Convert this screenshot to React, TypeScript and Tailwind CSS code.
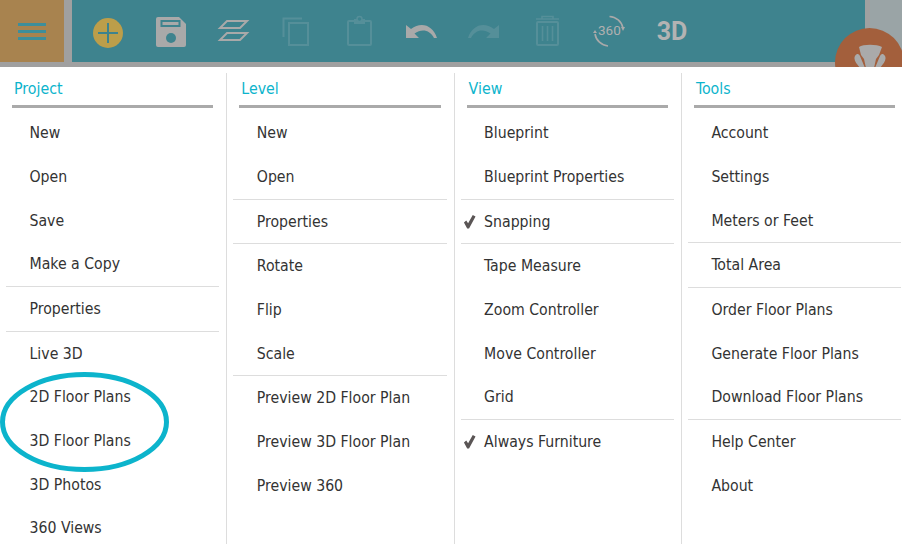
const Item = ({ t, check }: { t: string; check?: boolean }) => (
  <div className="relative flex h-[43.67px] items-center pl-[23.5px] text-[15.7px] text-[#333333]">
    {check && (
      <svg viewBox="0 0 14 16" className="absolute left-[2px] top-[14px] h-[15px] w-[13px]">
        <path d="M1 9 L3.5 7 L5.5 10 L10.5 1 L13.5 2.5 L6.5 15.5 L4.5 15.5 Z" fill="#5a5555" />
      </svg>
    )}
    {t}
  </div>
);
const Hr = () => <div className="h-px bg-[#dddddd]" />;

type Row = string | { t: string; check?: boolean } | null;
const cols: { title: string; rows: Row[] }[] = [
  { title: "Project", rows: ["New", "Open", "Save", "Make a Copy", null, "Properties", null, "Live 3D", "2D Floor Plans", "3D Floor Plans", "3D Photos", "360 Views"] },
  { title: "Level", rows: ["New", "Open", null, "Properties", null, "Rotate", "Flip", "Scale", null, "Preview 2D Floor Plan", "Preview 3D Floor Plan", "Preview 360"] },
  { title: "View", rows: ["Blueprint", "Blueprint Properties", null, { t: "Snapping", check: true }, null, "Tape Measure", "Zoom Controller", "Move Controller", "Grid", null, { t: "Always Furniture", check: true }] },
  { title: "Tools", rows: ["Account", "Settings", "Meters or Feet", null, "Total Area", null, "Order Floor Plans", "Generate Floor Plans", "Download Floor Plans", null, "Help Center", "About"] },
];

const G = "#a9a9a9";
const D = "#558f99";
const T = "#3e838e";
const Slot = ({ children }: { children: React.ReactNode }) => (
  <div className="flex w-[62.7px] shrink-0 items-center justify-center">
    <svg viewBox="0 0 36 36" width={36} height={36}>{children}</svg>
  </div>
);

export default function App() {
  return (
    <div className="h-[546px] w-[902px] overflow-hidden bg-white" style={{ fontFamily: '"DejaVu Sans Condensed", "DejaVu Sans", sans-serif' }}>
      <div className="relative flex h-[67px] overflow-hidden bg-[#a0a0a0]">
        <div className="flex h-[62px] w-[64px] shrink-0 flex-col items-center justify-center gap-[4px] bg-[#a8834f]">
          <div className="h-[3px] w-[28px] bg-[#3d8e9b]" />
          <div className="h-[3px] w-[28px] bg-[#3d8e9b]" />
          <div className="h-[3px] w-[28px] bg-[#3d8e9b]" />
        </div>
        <div className="ml-[8px] flex h-[62px] w-[793px] shrink-0 items-center bg-[#3e838e] pl-[4.5px]">
          <Slot>
            <circle cx="18" cy="20" r="15" fill="#bc9e4a" />
            <path d="M8 20H28M18 10V30" stroke={T} strokeWidth="2" />
          </Slot>
          <Slot>
            <path d="M5 4H26L33 11V32a2 2 0 0 1-2 2H5a2 2 0 0 1-2-2V6a2 2 0 0 1 2-2Z" fill={G} />
            <rect x="7.5" y="7" width="20" height="7" fill={T} />
            <rect x="9.5" y="9" width="16" height="3" fill={G} />
            <circle cx="18" cy="25" r="5" fill={T} />
          </Slot>
          <Slot>
            <path d="M12 8H32L25 15H5ZM12 20H32L25 27H5Z" fill="none" stroke={G} strokeWidth="2" />
          </Slot>
          <Slot>
            <path d="M5.5 24V5.5H24" fill="none" stroke={D} strokeWidth="2" />
            <rect x="11" y="10" width="19" height="22" fill="none" stroke={D} strokeWidth="2" />
          </Slot>
          <Slot>
            <rect x="7" y="8" width="23" height="24" rx="1" fill="none" stroke={D} strokeWidth="2" />
            <path d="M13 6H24V11H13Z" fill={D} />
            <circle cx="18.5" cy="6" r="2.5" fill={T} stroke={D} strokeWidth="1.5" />
          </Slot>
          <Slot>
            <path d="M3 12V25H16L11.5 20.5C19 15 27 17 31 25H34C30 12 18 8 8 16Z" fill={G} />
          </Slot>
          <Slot>
            <path d="M33 12V25H20L24.5 20.5C17 15 9 17 5 25H2C6 12 18 8 28 16Z" fill={D} />
          </Slot>
          <Slot>
            <rect x="8" y="9" width="21" height="23" rx="1" fill="none" stroke={D} strokeWidth="2" />
            <path d="M7 6H30M13 6V3.5H24V6M13.5 13V28M18.5 13V28M23.5 13V28" fill="none" stroke={D} strokeWidth="1.6" />
          </Slot>
          <div className="relative flex w-[62.7px] shrink-0 items-center justify-center">
            <svg viewBox="0 0 36 36" width={36} height={36}>
              <path d="M18.5 3.5A14.5 14.5 0 0 1 32 15" fill="none" stroke={G} strokeWidth="1.6" />
              <path d="M4 21A14.5 14.5 0 0 0 17 33" fill="none" stroke={G} strokeWidth="1.6" />
              <path d="M30 14L34 14L32 18ZM2 20L6 20L4 17Z" fill={G} />
            </svg>
            <span className="absolute text-[13.5px] leading-none text-[#b0b0b0]" style={{ fontFamily: "Roboto, sans-serif" }}>360</span>
          </div>
          <div className="flex w-[62.7px] shrink-0 items-center justify-center text-[25px] font-bold leading-none text-[#b3b3b3]" style={{ fontFamily: "Roboto, sans-serif" }}>
            3D
          </div>
        </div>
        <div className="absolute left-[870px] top-0 h-[62px] w-[32px] bg-[#9aa4a6]" />
        <div className="absolute left-[835px] top-[28px] h-[69px] w-[69px] rounded-full bg-[#a35f3c]" />
        <svg viewBox="0 0 34 24" className="absolute left-[853px] top-[44px] h-[24px] w-[34px]">
          <path d="M6 3C10 0 24 0 29 3L26 11 23 15 21 24H13L11 15 8 11Z" fill="#aaaaaa" />
          <path d="M2 12C4 9 6 10 7 12L12 24H7C4 20 0 16 2 12ZM32 12C30 9 28 10 27 12L22 24H27C30 20 34 16 32 12Z" fill="#aaaaaa" />
        </svg>
      </div>
      <div className="relative flex">
        {cols.map((c) => (
          <div key={c.title} className="relative h-[479px] w-[227.3px] shrink-0 pl-[6px] pr-[8px]">
            <div className="absolute right-0 top-[6px] bottom-[2px] w-px bg-[#dddddd]" />
            <div className="px-[8px] pt-[10px] text-[15.8px] text-[#0cb4cc]">{c.title}</div>
            <div className="mx-[6px] mt-[4px] h-[3px] bg-[#aaaaaa]" />
            <div className="mt-[3.7px]">
              {c.rows.map((r, j) =>
                r === null ? <Hr key={j} /> : typeof r === "string" ? <Item key={j} t={r} /> : <Item key={j} t={r.t} check={r.check} />
              )}
            </div>
          </div>
        ))}
        <svg viewBox="0 0 170 102" className="pointer-events-none absolute left-0 top-[304px] h-[102px] w-[170px]">
          <ellipse cx="84.5" cy="51" rx="82" ry="47.5" fill="none" stroke="#0cb4cc" strokeWidth="5" />
        </svg>
      </div>
    </div>
  );
}
